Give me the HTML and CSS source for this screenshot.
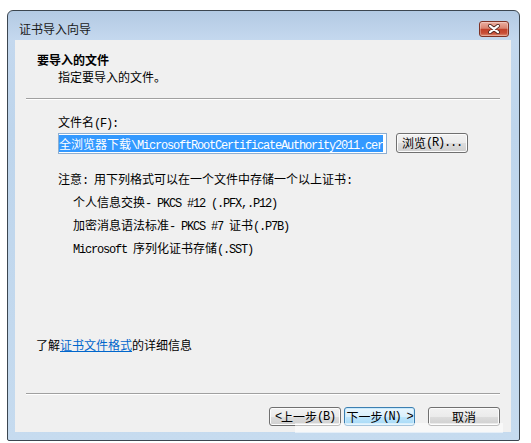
FILE: index.html
```html
<!DOCTYPE html>
<html lang="zh-CN">
<head>
<meta charset="utf-8">
<title>证书导入向导</title>
<link rel="stylesheet" href="styles.css">
</head>
<body>
<div class="window">
  <div class="titlebar">
    <span class="title">证书导入向导</span>
    <div class="close">
      <svg width="16" height="10" viewBox="0 0 16 10">
        <path d="M4 1.8 L12 8.2 M12 1.8 L4 8.2" stroke="#4e2620" stroke-width="3.8" stroke-linecap="round" fill="none"/>
        <path d="M4 1.8 L12 8.2 M12 1.8 L4 8.2" stroke="#ffffff" stroke-width="2.2" stroke-linecap="round" fill="none"/>
      </svg>
    </div>
  </div>
  <div class="client">
    <div class="header">
      <div class="h-title">要导入的文件</div>
      <div class="h-sub">指定要导入的文件。</div>
    </div>
    <div class="sep"></div>
    <div class="body">
      <div class="label">文件名<span class="en">(F):</span></div>
      <div class="file-row">
        <div class="textbox"><span class="sel">全浏览器下载<span class="en">\MicrosoftRootCertificateAuthority2011.cer</span></span></div>
        <div class="btn browse">浏览<span class="en">(R)...</span></div>
      </div>
      <div class="note">注意<span class="en">: </span>用下列格式可以在一个文件中存储一个以上证书<span class="en">:</span></div>
      <ul class="formats">
        <li>个人信息交换<span class="en">- PKCS #12 (.PFX,.P12)</span></li>
        <li>加密消息语法标准<span class="en">- PKCS #7 </span>证书<span class="en">(.P7B)</span></li>
        <li><span class="en">Microsoft </span>序列化证书存储<span class="en">(.SST)</span></li>
      </ul>
    </div>
    <div class="more">了解<a class="link">证书文件格式</a>的详细信息</div>
    <div class="sep sep2"></div>
    <div class="buttons">
      <div class="btn back"><span class="en">&lt; </span>上一步<span class="en">(B)</span></div>
      <div class="btn next default">下一步<span class="en">(N) &gt;</span></div>
      <div class="btn cancel">取消</div>
    </div>
  </div>
  <div class="watermark"></div>
</div>
</body>
</html>
```
FILE: styles.css
```css
* { box-sizing: border-box; }
html, body { margin: 0; padding: 0; background: #ffffff; }
body {
  font-family: "Noto Sans CJK SC", sans-serif;
  font-size: 12px;
  color: #000;
}
.en {
  font-family: "Liberation Mono", monospace;
  font-size: 12px;
  letter-spacing: -1.2px;
}
.window {
  position: relative;
  margin: 10px 0 0 7px;
  width: 513px;
  height: 431px;
  border: 1px solid #3c4650;
  border-radius: 6px 6px 2px 2px;
  background: linear-gradient(#b3cae3 0px, #c4d8ee 28px, #bed5ec 120px, #c6dbef 431px);
  padding: 0 8px 8px 7px;
  display: flex;
  flex-direction: column;
}
.titlebar {
  height: 29px;
  display: flex;
  align-items: flex-start;
  padding-left: 4px;
}
.title {
  margin-top: 11px;
  line-height: 14px;
  color: #1a1a1a;
}
.close {
  margin-left: auto;
  margin-right: 2px;
  margin-top: 10px;
  width: 30px;
  height: 16px;
  border: 1px solid #7f3224;
  border-radius: 3px;
  background: linear-gradient(#ecb0a2 0%, #d98370 45%, #c2412a 52%, #c84e36 80%, #e09078 100%);
  box-shadow: inset 0 0 0 1px rgba(255, 255, 255, 0.3);
  display: flex;
  align-items: center;
  justify-content: center;
}
.close svg { display: block; }
.client {
  height: 392px;
  background: #f0f0f0;
  display: flex;
  flex-direction: column;
}
.header { padding: 13px 0 0 22px; }
.h-title { font-weight: bold; line-height: 14px; }
.h-sub { margin: 3px 0 0 21px; line-height: 14px; }
.sep {
  margin: 14px 11px 0;
  height: 2px;
  border-top: 1px solid #a0a0a0;
  border-bottom: 1px solid #ffffff;
}
.body { padding-left: 43px; }
.label { margin-top: 15px; line-height: 14px; }
.file-row {
  margin-top: 2px;
  display: flex;
  align-items: flex-start;
}
.textbox {
  width: 329px;
  height: 21px;
  border: 1px solid #8eafd2;
  background: #ffffff;
  display: flex;
  align-items: center;
  overflow: hidden;
  white-space: nowrap;
}
.sel {
  background: #3399ff;
  color: #ffffff;
  line-height: 17px;
  height: 17px;
  display: inline-block;
}
.btn {
  height: 20px;
  border: 1px solid #707070;
  border-radius: 3px;
  background: linear-gradient(#f2f2f2 0%, #ebebeb 50%, #dddddd 51%, #cfcfcf 100%);
  box-shadow: inset 0 0 0 1px #fcfcfc;
  display: flex;
  align-items: center;
  justify-content: center;
  line-height: 14px;
  white-space: nowrap;
}
.browse { width: 72px; margin-left: 9px; }
.note { margin-top: 18px; line-height: 14px; }
.formats {
  list-style: none;
  margin: 2px 0 0 15px;
  padding: 0;
}
.formats li { height: 23px; line-height: 23px; }
.more { margin: 79px 0 0 21px; line-height: 14px; }
.link { color: #0066cc; text-decoration: underline; }
.sep2 { margin-top: 41px; }
.buttons {
  margin-top: 12px;
  display: flex;
  justify-content: flex-end;
  padding-right: 11px;
}
.buttons .btn { height: 19px; }
.back { width: 72px; }
.next { width: 71px; margin-left: 3px; }
.cancel { width: 72px; margin-left: 13px; }
.default {
  border-color: #3c7fb1;
  background: linear-gradient(#eaf6fd 0%, #d9f0fc 50%, #bee6fd 51%, #a7d9f5 100%);
  box-shadow: inset 0 0 0 1px #c8e9fc;
}
.watermark {
  position: absolute;
  left: 287px;
  top: 412px;
  width: 208px;
  height: 10px;
  background: rgba(255, 255, 255, 0.55);
}
```
